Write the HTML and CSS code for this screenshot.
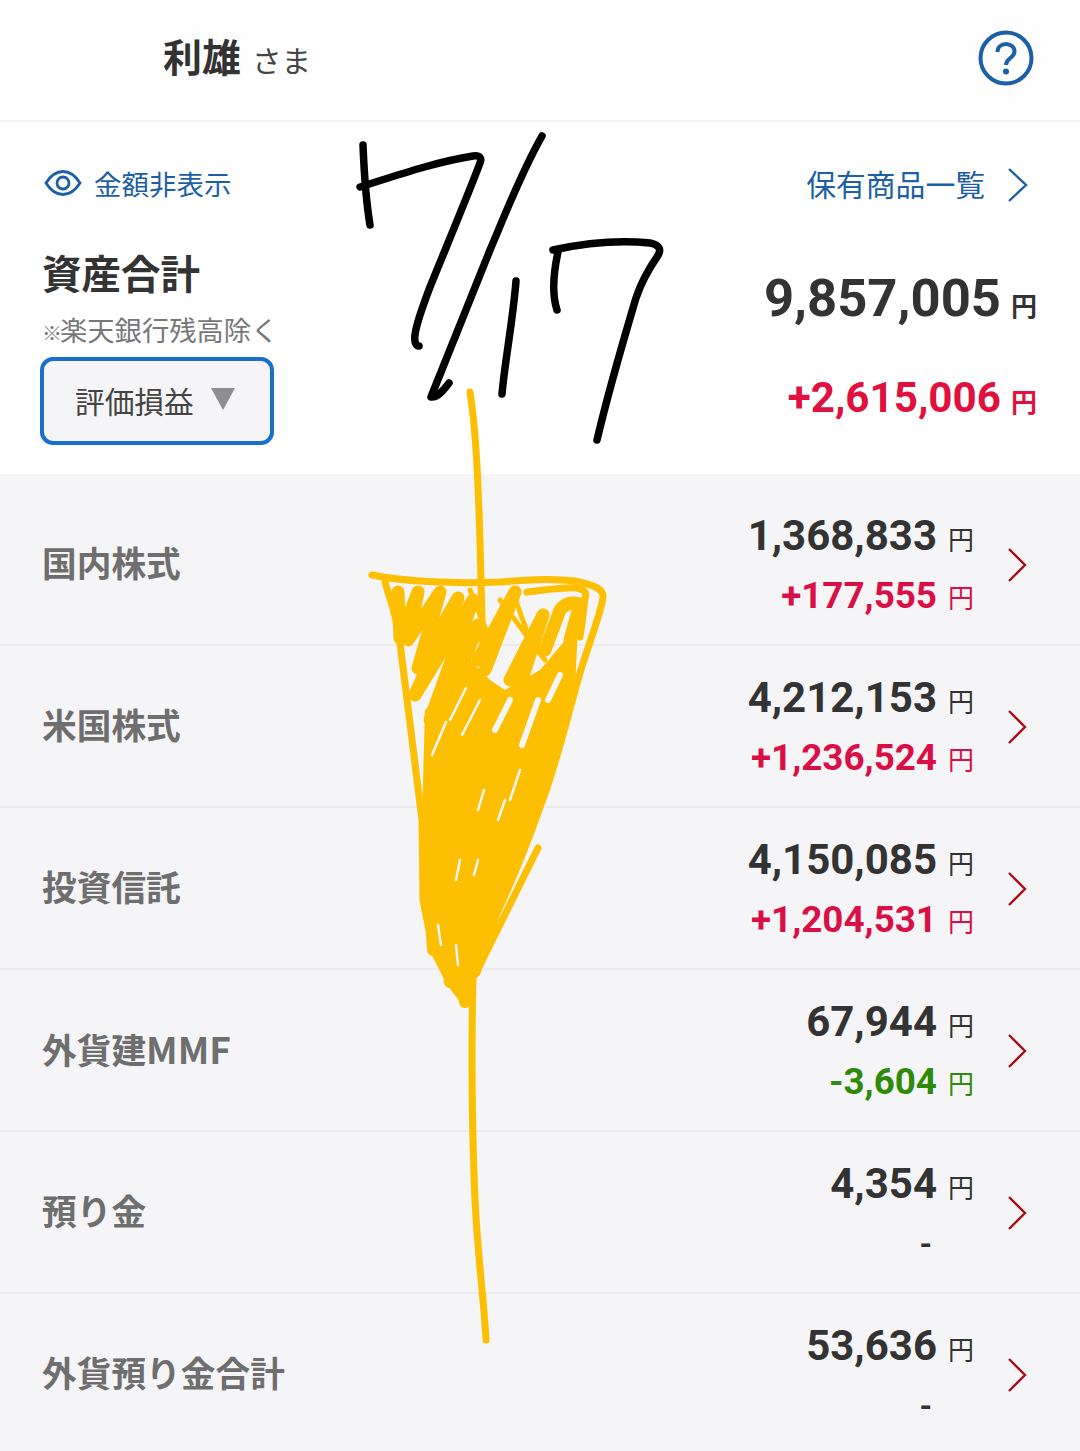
FILE: index.html
```html
<!DOCTYPE html>
<html lang="ja">
<head>
<meta charset="utf-8">
<title>資産合計</title>
<link rel="stylesheet" href="styles.css">
</head>
<body>
<div class="app">
  <header class="top">
    <div class="user"><span class="name">利雄</span><span class="sama">さま</span></div>
    <svg class="help" viewBox="0 0 56 56" width="56" height="56"><circle cx="28" cy="28" r="25.500" fill="none" stroke="#1c5fa5" stroke-width="4"/><path d="M19.500 22c0-5 3.800-8 8.500-8s8.500 3 8.500 7.500c0 6.500-8.500 6.500-8.500 13.500" fill="none" stroke="#1c5fa5" stroke-width="4"/><circle cx="28" cy="41.500" r="3" fill="#1c5fa5"/></svg>
  </header>
  <section class="summary">
    <div class="links">
      <div class="hide"><svg class="eye" viewBox="0 0 38 28" width="38" height="28"><path d="M2 14C7 6 13 2.500 19 2.500S31 6 36 14c-5 8-11 11.500-17 11.500S7 22 2 14z" fill="none" stroke="#1c5fa5" stroke-width="2.800"/><circle cx="19" cy="14" r="6" fill="none" stroke="#1c5fa5" stroke-width="2.800"/></svg><span>金額非表示</span></div>
      <div class="list-link"><span>保有商品一覧</span><svg class="chev-blue" viewBox="0 0 22 36" width="22" height="36"><path d="M2 2l17 16L2 34" fill="none" stroke="#1c5fa5" stroke-width="2.400"/></svg></div>
    </div>
    <div class="totals">
      <div class="total-left">
        <h1 class="total-title">資産合計</h1>
        <p class="note"><span class="mark">※</span>楽天銀行残高除く</p>
        <div class="select"><span>評価損益</span><i class="tri"></i></div>
      </div>
      <div class="total-right">
        <div class="big"><b>9,857,005</b><em>円</em></div>
        <div class="big gain"><b>+2,615,006</b><em>円</em></div>
      </div>
    </div>
  </section>
  <main class="list">
    <a class="row"><span class="label">国内株式</span><div class="vals"><div class="val"><b>1,368,833</b><em>円</em></div><div class="val plus"><b>+177,555</b><em>円</em></div></div><svg class="chev" viewBox="0 0 20 36" width="20" height="36"><path d="M2 2l16 16L2 34"/></svg></a>
    <a class="row"><span class="label">米国株式</span><div class="vals"><div class="val"><b>4,212,153</b><em>円</em></div><div class="val plus"><b>+1,236,524</b><em>円</em></div></div><svg class="chev" viewBox="0 0 20 36" width="20" height="36"><path d="M2 2l16 16L2 34"/></svg></a>
    <a class="row"><span class="label">投資信託</span><div class="vals"><div class="val"><b>4,150,085</b><em>円</em></div><div class="val plus"><b>+1,204,531</b><em>円</em></div></div><svg class="chev" viewBox="0 0 20 36" width="20" height="36"><path d="M2 2l16 16L2 34"/></svg></a>
    <a class="row"><span class="label">外貨建<span class="latin">MMF</span></span><div class="vals"><div class="val"><b>67,944</b><em>円</em></div><div class="val minus"><b>-3,604</b><em>円</em></div></div><svg class="chev" viewBox="0 0 20 36" width="20" height="36"><path d="M2 2l16 16L2 34"/></svg></a>
    <a class="row"><span class="label">預り金</span><div class="vals"><div class="val"><b>4,354</b><em>円</em></div><div class="val none"><b>-</b></div></div><svg class="chev" viewBox="0 0 20 36" width="20" height="36"><path d="M2 2l16 16L2 34"/></svg></a>
    <a class="row"><span class="label">外貨預り金合計</span><div class="vals"><div class="val"><b>53,636</b><em>円</em></div><div class="val none"><b>-</b></div></div><svg class="chev" viewBox="0 0 20 36" width="20" height="36"><path d="M2 2l16 16L2 34"/></svg></a>
  </main>
  <svg class="ink" viewBox="0 0 1080 1451" width="1080" height="1451">
    <g class="black">
      <path d="M363 145C364 170 365 195 370 225"/>
      <path d="M360 187C395 176 435 162 473 156C480 155 482 158 480 163C470 190 445 250 430 287C422 308 416 325 415 335C414 342 416 346 419 346"/>
      <path d="M542 136C520 175 505 215 490 250C470 300 450 350 431 397C437 398 443 391 449 383"/>
      <path d="M516 281C513 320 505 360 502 394"/>
      <path d="M553 250C585 243 620 240 650 243C660 245 662 250 657 257C648 270 641 283 636 298C625 335 610 385 597 440"/>
      <path d="M558 252C553 275 552 295 557 310"/>
    </g>
    <g class="gold thin">
      <path d="M470 392C476 430 478 480 480 540L483 660"/>
      <path d="M372 575C400 581 450 584 500 582C530 580 550 578 575 581C590 584 604 588 603 597C602 610 590 640 580 673C565 725 555 770 540 807C525 850 510 885 497 913L477 973"/>
      <path d="M385 582C390 600 398 620 400 643C407 700 414 760 422 820L423 900L433 950L450 983L465 1003"/>
      <path d="M538 848L475 975"/>
      <path d="M473 975C471 1060 472 1130 475 1200C478 1260 484 1300 486 1340"/>
      <path d="M527 592C545 590 565 587 577 588C585 590 587 593 585 598C583 615 582 625 580 637"/>
    </g>
    <polygon class="gold-fill" points="425,710 445,690 470,660 490,680 505,690 540,670 578,625 575,690 540,807 497,913 477,973 465,1003 450,983 433,950 423,900 422,820"/>
    <g class="gold thick">
      <path d="M398 592L400 638L418 592L408 640L440 592L418 668L458 598L415 695L473 600L430 720L478 625L436 735"/>
      <path d="M478 660L515 592L485 670"/>
      <path d="M510 680L543 615L520 685"/>
      <path d="M545 650L560 610C565 603 572 602 580 604L570 640"/>
    </g>
    <g class="gold slim">
      <path d="M500 600L530 640L512 590M530 640L545 660"/>
      <path d="M470 590L490 640"/>
    </g>
    <g class="gold blob">
      <path d="M433 950L428 870M450 982L440 890M465 1002L455 900"/>
    </g>
    <g class="gap">
      <path d="M446 722L432 755M466 688L450 720M480 700L462 735M484 790L478 810M505 800L498 820M478 860L474 875M520 770L510 800M460 860L456 880M441 945L438 925M458 965L456 945"/>
    </g>
    <g class="gap wide">
      <path d="M538 700L522 745M560 675L548 700"/>
      <path d="M510 700L495 730"/>
    </g>
  </svg>
</div>
</body>
</html>
```
FILE: styles.css
```css
* { box-sizing: border-box; }
html, body { margin: 0; padding: 0; }
body { background: #fff; font-family: "Noto Sans CJK JP", "Noto Sans", sans-serif; color: #333; }
.app { position: relative; width: 1080px; height: 1451px; overflow: hidden; }

.top { height: 122px; display: flex; align-items: center; justify-content: space-between; padding: 0 46px 4px 163px; background: #fefefe; border-bottom: 2px solid #f2f2f2; }
.user { display: flex; align-items: baseline; gap: 11px; padding-bottom: 6px; }
.name { font-size: 39px; font-weight: 700; line-height: 1; }
.sama { font-size: 29.500px; color: #444; line-height: 1; }

.summary { height: 352px; padding: 0 43px 0 42px; }
.links { display: flex; justify-content: space-between; align-items: center; padding-top: 38px; height: 84px; }
.hide { display: flex; align-items: center; gap: 12px; padding-left: 2px; color: #1c5fa5; font-size: 27.500px; line-height: 40px; }
.list-link { display: flex; align-items: center; gap: 22px; color: #1c5fa5; font-size: 29.800px; line-height: 40px; padding-right: 8px; }
.chev-blue { margin-top: 3px; }
.totals { display: flex; justify-content: space-between; align-items: flex-start; padding-top: 41px; }
.total-left { width: 240px; }
.total-title { margin: 0; font-size: 39.500px; font-weight: 700; line-height: 50px; }
.note { margin: 12px 0 0; font-size: 27.300px; line-height: 40px; color: #777; white-space: nowrap; }
.mark { font-size: 20px; font-weight: 700; letter-spacing: -2px; }
.select { width: 234px; height: 88px; margin: 4px 0 0 -2px; display: flex; align-items: center; gap: 17px; padding: 0 0 2px 31px; background: #f5f5f7; border: 4.500px solid #1a6fcb; border-radius: 13px; font-size: 29.700px; color: #444; }
.tri { width: 0; height: 0; border-left: 12px solid transparent; border-right: 12px solid transparent; border-top: 22px solid #8e8e8e; margin-top: -3px; }
.total-right { display: flex; flex-direction: column; align-items: flex-end; padding-top: 21px; }
.big { display: flex; align-items: baseline; gap: 10px; height: 60px; line-height: 60px; }
.big + .big { margin-top: 45px; height: 50px; line-height: 50px; }
.big b { font-family: Roboto, sans-serif; font-size: 52.600px; font-weight: 700; }
.big + .big b { font-size: 42.200px; }
.big em { font-style: normal; font-weight: 700; font-size: 26px; }
.gain { color: #e0103f; }

.list { background: #f5f5f7; padding-top: 10px; height: 978px; }
.row { display: flex; align-items: center; height: 162px; padding: 0 53px 4px 42px; border-bottom: 2px solid #ececee; }
.label { flex: 1; font-size: 34.700px; font-weight: 700; color: #6e6e6e; line-height: 50px; }
.latin { font-size: 37px; }
.vals { display: flex; flex-direction: column; align-items: flex-end; gap: 12px; margin-right: 33px; padding-top: 8px; }
.val { display: flex; align-items: baseline; gap: 11px; height: 48px; line-height: 48px; color: #333; }
.val b { font-family: Roboto, sans-serif; font-size: 42px; font-weight: 700; }
.val em { font-style: normal; font-size: 26px; font-weight: 400; }
.plus b { font-size: 36.800px; }
.plus { color: #d90f47; }
.minus { color: #2f8a0a; }
.minus b { font-size: 36.800px; }
.none b { font-size: 32px; margin-right: 42px; }
.chev { flex: none; margin-top: 6px; }
.chev path { fill: none; stroke: #a80e1a; stroke-width: 2.400; }

.ink { position: absolute; left: 0; top: 0; pointer-events: none; }
.ink g { fill: none; stroke-linecap: round; stroke-linejoin: round; }
.ink .black { stroke: #000; stroke-width: 7.500px; }
.ink .gold { stroke: #fcbf02; }
.ink .thin { stroke-width: 7px; }
.ink .thick { stroke-width: 13px; }
.ink .slim { stroke-width: 5px; }
.ink .blob { stroke-width: 12px; }
.gold-fill { fill: #fcbf02; }
.ink .gap { stroke: #f5f5f7; stroke-width: 2.500px; }
.ink .wide { stroke-width: 6px; }
```
